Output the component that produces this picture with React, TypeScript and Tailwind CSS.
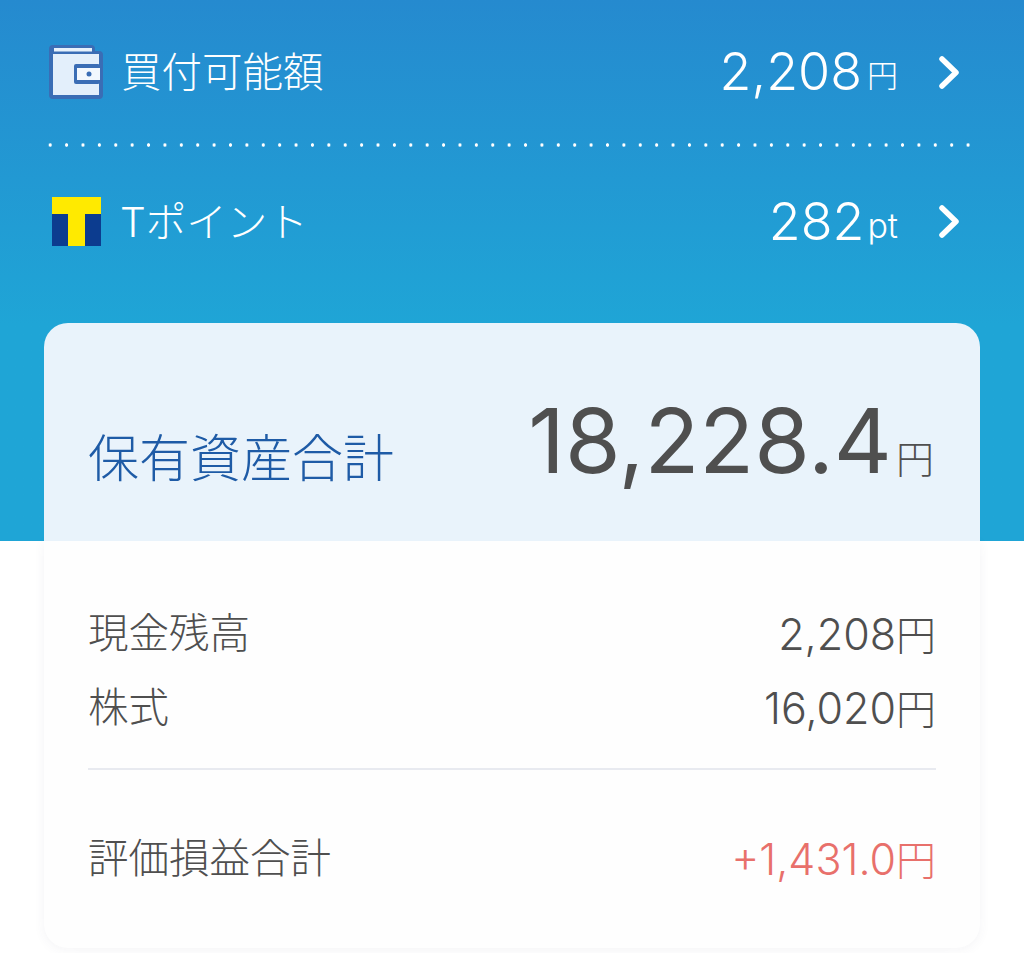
const jp = "font-['Inter','Noto_Sans_CJK_JP',sans-serif]";

function Chevron() {
  return (
    <svg width="20" height="33" viewBox="0 0 20 33" className="ml-[41px] mr-[65px] shrink-0">
      <path d="M3 3 L17 16.500 L3 30" fill="none" stroke="#fff" strokeWidth="5.500" strokeLinecap="round" strokeLinejoin="round" />
    </svg>
  );
}

function WalletIcon() {
  return (
    <svg width="54" height="54" viewBox="0 0 54 54" className="shrink-0">
      <path d="M4 0 H42 Q46 0 46 4 V6 H50 Q54 6 54 10 V50 Q54 54 50 54 H4 Q0 54 0 50 V4 Q0 0 4 0 Z" fill="#3a6db5" />
      <rect x="5" y="3" width="38" height="3.500" fill="#e6f1fb" />
      <rect x="4" y="9" width="46" height="41" fill="#e3effb" />
      <rect x="25" y="19" width="26" height="20" rx="2" fill="#3a6db5" />
      <rect x="28" y="23" width="23" height="12" fill="#f2f8fe" />
      <circle cx="40" cy="29" r="2.500" fill="#3a6db5" />
    </svg>
  );
}

function TPointIcon() {
  return (
    <svg width="49" height="49" viewBox="0 0 49 49" className="shrink-0">
      <rect width="49" height="49" fill="#0c3c8f" />
      <rect width="49" height="17" fill="#ffea00" />
      <rect x="16" width="17" height="49" fill="#ffea00" />
    </svg>
  );
}

function DetailRow({ label, value, valueClass }: { label: string; value: string; valueClass?: string }) {
  return (
    <div className="flex items-center justify-between h-[74px]">
      <span className="text-[40.500px] font-light leading-none text-[#4f4f4f]">{label}</span>
      <span className={`flex items-baseline leading-none ${valueClass ?? 'text-[#4f4f4f]'}`}>
        <span className="text-[43px] font-[350]">{value}</span>
        <span className="text-[40px] font-light">円</span>
      </span>
    </div>
  );
}

export default function App() {
  return (
    <div className={`w-[1024px] h-[953px] overflow-hidden bg-white ${jp}`}>
      {/* blue header, the card starts inside it */}
      <div className="h-[541px] bg-gradient-to-b from-[#258acf] to-[#1fa5d6] to-60% flex flex-col">
        <div className="flex items-center h-[54px] mt-[45px] ml-[49px] text-white">
          <WalletIcon />
          <span className="ml-[18px] mt-[2px] text-[40.500px] font-light leading-none">買付可能額</span>
          <span className="ml-auto text-[52px] font-[350] leading-none">2,208</span>
          <span className="ml-[5px] mt-[6px] text-[31px] font-light leading-none">円</span>
          <Chevron />
        </div>

        <div className="mt-[44px] ml-[42px] mr-[48px] h-[4px] bg-[radial-gradient(circle,#ffffff_1.400px,transparent_2px)] bg-[length:16.400px_4px]" />

        <div className="flex items-center h-[49px] mt-[50px] ml-[52px] text-white">
          <TPointIcon />
          <span className="ml-[19px] mt-[4px] text-[40.500px] font-light leading-none">Tポイント</span>
          <span className="ml-auto text-[52px] font-[350] leading-none">282</span>
          <span className="ml-[3px] mt-[8px] text-[34px] font-[350] leading-none">pt</span>
          <Chevron />
        </div>

        <div className="mt-[77px] mx-[44px] h-[218px] rounded-t-[24px] bg-[#e9f3fb] flex items-baseline justify-between pl-[44px] pr-[46px] pt-[77px]">
          <span className="text-[51px] font-light leading-none text-[#1e5ba6]">保有資産合計</span>
          <span className="flex items-baseline text-[#4f4f4f] -translate-y-[4px]">
            <span className="text-[90px] font-normal leading-none">18,228.4</span>
            <span className="ml-[4px] text-[38px] font-light leading-none">円</span>
          </span>
        </div>
      </div>

      {/* white lower half of the card */}
      <div className="mx-[44px] h-[407px] rounded-b-[24px] bg-[#fefefe] shadow-[0_2px_12px_rgba(60,70,100,0.06)] px-[44px] pt-[56px]">
        <DetailRow label="現金残高" value="2,208" />
        <DetailRow label="株式" value="16,020" />
        <div className="mt-[23px] h-[2px] bg-[#e8eaf0]" />
        <div className="mt-[52px]">
          <DetailRow label="評価損益合計" value="+1,431.0" valueClass="text-[#e8706b]" />
        </div>
      </div>
    </div>
  );
}
